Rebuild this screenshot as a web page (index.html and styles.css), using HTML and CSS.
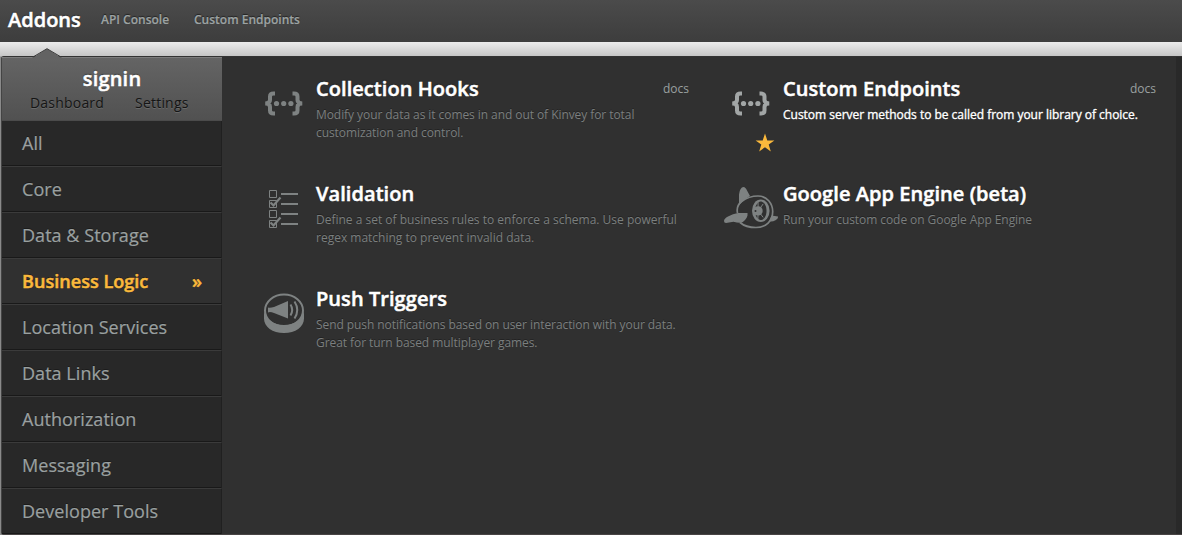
FILE: index.html
```html
<!DOCTYPE html>
<html lang="en">
<head>
<meta charset="utf-8">
<title>Addons</title>
<link rel="stylesheet" href="styles.css">
</head>
<body>
<header class="topbar">
  <a class="brand">Addons</a>
  <a class="toplink api">API Console</a>
  <a class="toplink">Custom Endpoints</a>
</header>
<div class="panel">
  <aside class="sidebar">
    <div class="app">
      <svg class="pointer" width="30" height="11" viewBox="0 0 30 11"><path d="M0 9.5 L2 9 15 .7 28 9 30 9.5V11H0z" fill="#636363"/><path d="M1 9 L15 .7 29 9" fill="none" stroke="#3a3a3a"/></svg>
      <div class="app-name">signin</div>
      <div class="app-links"><a class="dash">Dashboard</a><a class="settings">Settings</a></div>
    </div>
    <nav class="menu">
      <a class="item"><span>All</span></a>
      <a class="item"><span>Core</span></a>
      <a class="item"><span>Data &amp; Storage</span></a>
      <a class="item active"><span>Business Logic</span><span class="arrow">»</span></a>
      <a class="item"><span>Location Services</span></a>
      <a class="item"><span>Data Links</span></a>
      <a class="item"><span>Authorization</span></a>
      <a class="item"><span>Messaging</span></a>
      <a class="item"><span>Developer Tools</span></a>
    </nav>
  </aside>
  <main class="grid">
    <section class="card">
      <div class="icon">
        <svg width="54" height="54" viewBox="0 0 54 54" fill="none" stroke="#7e8282" stroke-width="4"><path d="M19 18.600h-1.500q-3.500 0-3.500 3v3.500q0 3.400-4.800 3.400 4.800 0 4.800 3.400v3.500q0 3 3.500 3H19M36.500 18.600H38q3.500 0 3.500 3v3.500q0 3.400 4.800 3.400-4.800 0-4.800 3.400v3.500q0 3-3.500 3h-1.500"/><g fill="#7e8282" stroke="none"><circle cx="20.500" cy="28.500" r="2.600"/><circle cx="27.700" cy="28.500" r="2.600"/><circle cx="34.900" cy="28.500" r="2.600"/></g></svg>
      </div>
      <div class="body">
        <div class="head"><h2>Collection Hooks</h2><a class="docs">docs</a></div>
        <p class="d-hooks">Modify your data as it comes in and out of Kinvey for total<br>customization and control.</p>
      </div>
    </section>
    <section class="card hover">
      <div class="icon">
        <svg width="54" height="54" viewBox="0 0 54 54" fill="none" stroke="#a2a6a6" stroke-width="4"><path d="M19 18.600h-1.500q-3.500 0-3.500 3v3.500q0 3.400-4.800 3.400 4.800 0 4.800 3.400v3.500q0 3 3.500 3H19M36.500 18.600H38q3.500 0 3.500 3v3.500q0 3.400 4.800 3.400-4.800 0-4.800 3.400v3.500q0 3-3.500 3h-1.500"/><g fill="#a2a6a6" stroke="none"><circle cx="20.500" cy="28.500" r="2.600"/><circle cx="27.700" cy="28.500" r="2.600"/><circle cx="34.900" cy="28.500" r="2.600"/></g></svg>
        <svg class="star" width="20" height="20" viewBox="0 0 20 20"><path d="M10 .6l2.300 6.800h7.100l-5.700 4.100 2.100 6.900-5.800-4.200-5.800 4.200 2.100-6.900L.6 7.400h7.100z" fill="#fbb93c"/></svg>
      </div>
      <div class="body">
        <div class="head"><h2>Custom Endpoints</h2><a class="docs">docs</a></div>
        <p>Custom server methods to be called from your library of choice.</p>
      </div>
    </section>
    <section class="card">
      <div class="icon">
        <svg width="54" height="54" viewBox="-1 0 54 54" fill="none" stroke="#7e8282"><path d="M12.500 10.500h7v7h-7zM12.500 20.500h7v7h-7zM12.500 30.500h7v7h-7zM12.500 40.500h7v7h-7z"/><path d="M24 14h17M24 24h17M24 34h17M24 44h17" stroke-width="2"/><path d="M13.500 22.500l3 3 7-8M13.500 42.500l3 3 7-8" stroke-width="2.200"/></svg>
      </div>
      <div class="body">
        <div class="head"><h2>Validation</h2></div>
        <p>Define a set of business rules to enforce a schema. Use powerful<br>regex matching to prevent invalid data.</p>
      </div>
    </section>
    <section class="card">
      <div class="icon">
        <svg width="56" height="54" viewBox="-1 0 56 54" fill="#7e8282"><path d="M15 25V14.500Q16 7 19.500 7 21.500 7 23 10.500L26 16 20 20z"/><path d="M0 41q0-2.500 4-4.500 5-2.700 10-3.500h9.500v2.500q-1 4-5.500 7Q15 43.500 9.500 41.800L2 43Q0 43 0 41zM47.500 35.500l6.500 1q.5 2-2.500 3.800-3 1.700-6.500 1z"/><path d="M13.500 33Q12 26 17.500 21.500 25 16 34 16c9 0 14.700 7.500 14.700 15.500C48.700 41 42 47.500 32 47.500c-6 0-12-1.500-16-5" fill="none" stroke="#7e8282" stroke-width="1.700"/><ellipse cx="36.800" cy="30.800" rx="8.800" ry="11.300"/><path d="M36.500 21.500c3.500 0 6 4 6 9.300s-2.500 9.300-6 9.300c-2.500 0-5.500-4-5.500-9.300s3-9.300 5.500-9.300z" fill="#303030"/><circle cx="34" cy="30.900" r="4.700"/><path d="M34.200 30.900l-.2-9M34.200 30.900l5-7M34.200 30.900l5 6.500M34.200 30.900l-.4 9" fill="none" stroke="#7e8282" stroke-width="1"/><circle cx="31.500" cy="31" r="1" fill="#303030"/></svg>
      </div>
      <div class="body">
        <div class="head"><h2>Google App Engine (beta)</h2></div>
        <p class="d-gae">Run your custom code on Google App Engine</p>
      </div>
    </section>
    <section class="card">
      <div class="icon">
        <svg width="54" height="54" viewBox="0 0 54 54" fill="none" stroke="#7e8282"><path d="M8 25.500v8C8 42 16.500 48 28 48s20-6 20-14.500v-8C47 34 38 40 28 40S9 34 8 25.500z" fill="#7e8282" stroke="none"/><ellipse cx="28" cy="25.500" rx="19" ry="16" stroke-width="2"/><path d="M12 22.500q2 .8 6-.5l14-6v17.500l-14-5.500q-4-1.500-6-.5z" fill="#7e8282" stroke="none"/><path d="M34.500 19.500q3.400 5.500 0 11M38.500 16.500q5.500 8.500 0 17" stroke-width="2"/></svg>
      </div>
      <div class="body">
        <div class="head"><h2>Push Triggers</h2></div>
        <p class="d-push">Send push notifications based on user interaction with your data.<br>Great for turn based multiplayer games.</p>
      </div>
    </section>
  </main>
</div>
</body>
</html>
```
FILE: styles.css
```css
* { box-sizing: border-box; }
body {
  margin: 0;
  width: 1182px;
  height: 535px;
  overflow: hidden;
  display: flex;
  flex-direction: column;
  background: linear-gradient(#ebebeb 42px, #c6c6c6 56px, #8a8a8a 57px);
  font-family: "Open Sans", sans-serif;
}
.topbar {
  height: 42px;
  flex: none;
  display: flex;
  align-items: center;
  padding: 0 0 3px 8px;
  background: linear-gradient(#4b4b4b, #3d3d3d);
  text-shadow: 0 -1px 1px #222;
}
.brand { color: #fff; font-size: 20px; font-weight: 600; width: 93px; -webkit-text-stroke: .5px; }
.toplink { color: #9da3a3; font-size: 12px; font-weight: 600; -webkit-text-stroke: .2px; }
.api { width: 93px; }
.panel {
  margin: 14px 0 0 1px;
  height: 479px;
  display: flex;
  background: #303030;
  border: 1px solid #333;
  border-right: 0;
  border-radius: 3px 0 0 3px;
  border-left-color: #444;
  border-bottom-color: #484444;
  box-shadow: inset -6px 0 #292929;
}
.sidebar { width: 220px; flex: none; background: #282828; }
.app {
  position: relative;
  height: 64px;
  padding-top: 8px;
  text-align: center;
  background: linear-gradient(#646464, #515151);
  border-top: 1px solid #7c7c7c;
  border-bottom: 1px solid #4b4b4b;
}
.pointer { position: absolute; left: 30px; top: -10px; }
.app-name { color: #fff; font-size: 20px; line-height: 26px; font-weight: 600; text-shadow: 0 -1px 1px #333; letter-spacing: .2px; -webkit-text-stroke: .5px; }
.app-links {
  display: flex;
  padding-left: 28px;
  gap: 31px;
  font-size: 14px;
  line-height: 22px;
  letter-spacing: .2px;
  color: #151515;
  text-shadow: 0 1px #6a6a6a;
}
.item {
  height: 46px;
  display: flex;
  align-items: center;
  justify-content: space-between;
  padding: 0 19px 2px 20px;
  font-size: 18px;
  letter-spacing: .04px;
  color: #9aa0a0;
  border-bottom: 1px solid #3b3b3b;
  border-right: 1px solid #202020;
  box-shadow: inset 0 -1px #191919;
  text-shadow: 0 -1px #1b1b1b;
  -webkit-text-stroke: .2px;
}
.item:last-child { height: 45px; border-bottom: 0; padding-bottom: 1px; }
.active { background: #303030; color: #fbb93c; font-weight: 600; -webkit-text-stroke: .5px; }
.grid {
  display: grid;
  grid-template-columns: 425px 425px;
  column-gap: 42px;
  grid-auto-rows: 105px;
  padding: 18px 0 0 40px;
}
.card { display: flex; }
.icon { position: relative; width: 54px; flex: none; }
.icon svg { display: block; margin-left: -6px; }
.icon .star { position: absolute; left: 32px; top: 58px; }
.body { width: 373px; flex: none; }
.head { display: flex; justify-content: space-between; height: 31px; }
h2 { margin: 0; font-size: 20px; line-height: 28px; font-weight: 600; color: #fff; text-shadow: 0 -1px 1px #222; letter-spacing: .06px; -webkit-text-stroke: .5px; }
.docs { font-size: 12px; line-height: 28px; color: #9aa0a0; }
p { margin: 0; font-size: 12px; line-height: 18px; color: #7b7f7f; white-space: nowrap; text-shadow: 0 -1px #222; }
.d-hooks, .d-gae, .d-push { letter-spacing: -.07px; }
.hover p { color: #fff; font-weight: 400; letter-spacing: -.02px; -webkit-text-stroke: .35px; }
```
